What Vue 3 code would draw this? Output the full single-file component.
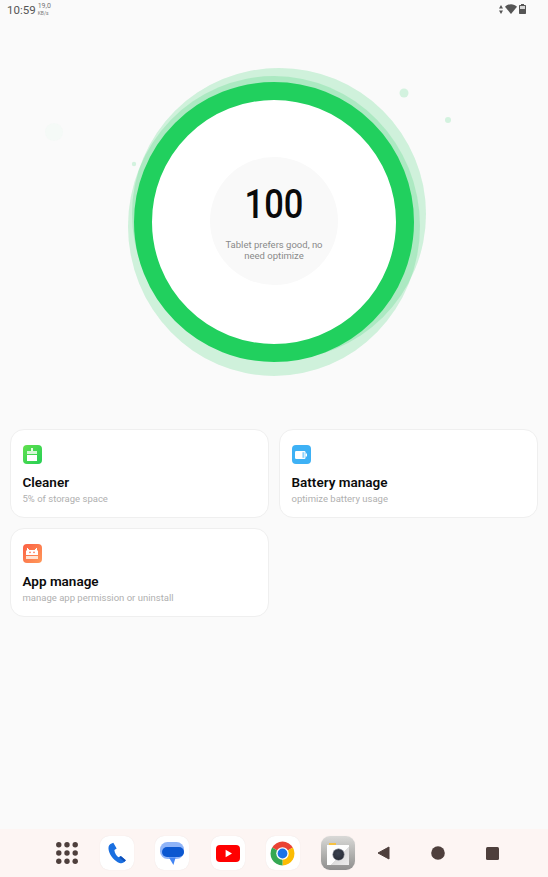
<script setup>
const cards = [
  { key: 'cleaner', title: 'Cleaner', sub: '5% of storage space' },
  { key: 'battery', title: 'Battery manage', sub: 'optimize battery usage' },
  { key: 'apps', title: 'App manage', sub: 'manage app permission or uninstall' },
]
</script>

<template>
  <div class="screen">
    <header class="status">
      <div class="status-left">
        <span class="time">10:59</span>
        <span class="speed"><b>19,0</b><i>KB/s</i></span>
      </div>
      <div class="status-right">
        <svg width="4" height="9" viewBox="0 0 4 9"><path d="M2 0 L4 3.4 H0Z M2 9 L0 5.6 H4Z" fill="#555" /></svg>
        <svg width="12" height="10" viewBox="0 0 12 10"><path d="M0 2.8 C3 -.6 9 -.6 12 2.8 L6 10Z" fill="#555" /></svg>
        <svg width="7" height="10" viewBox="0 0 7 10">
          <path d="M2 0 H5 V1 H6.3 A.7 .7 0 0 1 7 1.7 V9.3 A.7 .7 0 0 1 6.3 10 H.7 A.7 .7 0 0 1 0 9.3 V1.7 A.7 .7 0 0 1 .7 1 H2Z" fill="#555" />
          <rect x="1" y="2" width="5" height="3" fill="#d8d8d8" />
        </svg>
      </div>
    </header>

    <section class="hero">
      <svg class="gauge" width="548" height="400" viewBox="0 0 548 400">
        <circle cx="54" cy="112" r="9" fill="#effaf3" opacity=".5" />
        <circle cx="404" cy="73" r="4.5" fill="#d3f2df" />
        <circle cx="448" cy="100" r="3" fill="#d3f2df" />
        <circle cx="134" cy="144" r="2.2" fill="#d3f2df" />
        <ellipse cx="279" cy="194" rx="147" ry="146" fill="#21cf5f" opacity=".2" />
        <ellipse cx="274" cy="206" rx="146" ry="150" fill="#21cf5f" opacity=".2" />
        <circle cx="274" cy="202" r="131" fill="#fff" stroke="#21d05e" stroke-width="18" />
        <circle cx="274" cy="201" r="64" fill="#f9f9f9" />
      </svg>
      <div class="score">
        <div class="num">100</div>
        <p class="msg">Tablet prefers good, no need optimize</p>
      </div>
    </section>

    <main class="cards">
      <article v-for="c in cards" :key="c.key" class="card">
        <span class="icon" :class="c.key">
          <svg v-if="c.key === 'cleaner'" width="12" height="14" viewBox="0 0 12 14">
            <rect x="5" y="0" width="2" height="4" fill="#e4fbe4" />
            <rect x="1" y="3" width="10" height="3" fill="#d6f8d6" />
            <path d="M1 7 H11 V13 H1Z" fill="#fff" />
          </svg>
          <svg v-else-if="c.key === 'battery'" width="12" height="8" viewBox="0 0 12 8">
            <rect x="0" y="0" width="10.5" height="8" rx="1.2" fill="#fff" />
            <rect x="10.5" y="2.5" width="1.5" height="3" fill="#fff" />
            <rect x="7.4" y="1.2" width="2" height="5.6" fill="#8fd2fa" />
          </svg>
          <svg v-else width="12" height="12" viewBox="0 0 12 12">
            <path d="M1 0 H2 V1 H3 V2 H9 V1 H10 V0 H11 V2 L12 3 V7 H0 V3 L1 2Z" fill="#fff" />
            <circle cx="4" cy="4.4" r=".8" fill="#fb7350" />
            <circle cx="8" cy="4.4" r=".8" fill="#fb7350" />
            <rect x="0" y="8" width="12" height="3" fill="#ffe3d4" />
          </svg>
        </span>
        <h2>{{ c.title }}</h2>
        <p>{{ c.sub }}</p>
      </article>
    </main>

    <nav class="dock">
      <svg class="apps" width="22" height="22" viewBox="0 0 22 22">
        <template v-for="y in [2.8, 11, 19.2]" :key="y">
          <circle v-for="x in [2.8, 11, 19.2]" :key="x" :cx="x" :cy="y" r="2.7" fill="#4e3f3c" />
        </template>
      </svg>

      <span class="tile phone">
        <svg width="18" height="22" viewBox="0 0 22 26">
          <path d="M6.5 .5 L3 2 C.4 3.4 .2 7 1 10.4 C2.6 17 8.4 23.4 14 25.2 C16.6 26 18.8 25.4 20.2 23.8 L21.8 21.8 L15.6 16.6 L12.8 18.2 C10.4 16.8 8 12.6 7.8 9.2 L10.6 7.4Z" fill="#1a6fe0" />
          <path d="M15.6 16.6 L21.8 21.8 L20.2 23.8 L14.2 18.8Z" fill="#0f4fb8" />
        </svg>
      </span>

      <span class="tile">
        <svg width="24" height="23" viewBox="0 0 24 23">
          <rect width="24" height="17" rx="7.5" fill="#8fb4f8" />
          <path d="M9 15.5 L13.4 23 L15.6 15.5Z" fill="#4285f4" />
          <rect x="2" y="5" width="22" height="10" rx="5" fill="#0b57d0" />
        </svg>
      </span>

      <span class="tile">
        <svg width="24" height="17" viewBox="0 0 24 17">
          <rect width="24" height="17" rx="4" fill="#f00" />
          <path d="M9.6 4.8 L16 8.5 L9.6 12.2Z" fill="#fff" />
        </svg>
      </span>

      <span class="tile">
        <svg width="25" height="25" viewBox="0 0 48 48">
          <path d="M24 24 L4.1 12.5 A23 23 0 0 1 43.9 12.5Z" fill="#ea4335" />
          <path d="M24 24 L43.9 12.5 A23 23 0 0 1 24 47Z" fill="#fbbc04" />
          <path d="M24 24 L24 47 A23 23 0 0 1 4.1 12.5Z" fill="#34a853" />
          <circle cx="24" cy="24" r="12" fill="#fff" />
          <circle cx="24" cy="24" r="9.4" fill="#1a73e8" />
        </svg>
      </span>

      <span class="tile camera">
        <span class="film">
          <span class="lens"></span>
        </span>
      </span>

      <span class="keys">
        <svg width="13" height="14" viewBox="0 0 13 14"><path d="M12 1 V13 L1 7Z" fill="#4e3f3c" stroke="#4e3f3c" stroke-linejoin="round" /></svg>
        <svg width="14" height="14" viewBox="0 0 14 14"><circle cx="7" cy="7" r="6.8" fill="#4e3f3c" /></svg>
        <svg width="13" height="13" viewBox="0 0 13 13"><rect width="13" height="13" rx="1.5" fill="#4e3f3c" /></svg>
      </span>
    </nav>
  </div>
</template>

<style>
html, body { margin: 0; background: #fafafa; }
</style>

<style scoped>
.screen {
  width: 548px;
  height: 877px;
  overflow: hidden;
  display: flex;
  flex-direction: column;
  background: #fafafa;
  font-family: Roboto, "Liberation Sans", sans-serif;
}
.status {
  height: 20px;
  flex: none;
  display: flex;
  justify-content: space-between;
  align-items: center;
  padding: 0 22px 0 7px;
  color: #555;
}
.status-left { display: flex; align-items: flex-start; gap: 2px; }
.time { font-size: 11.5px; line-height: 21px; }
.speed { display: flex; flex-direction: column; margin-top: 3px; color: #777; }
.speed b { font-weight: 400; font-size: 7px; line-height: 7px; }
.speed i { font-style: normal; font-size: 5px; line-height: 6px; }
.status-right { display: flex; align-items: center; gap: 2px; margin-top: -2px; }

.hero { position: relative; height: 400px; flex: none; }
.gauge { display: block; }
.score {
  position: absolute;
  left: 210px;
  top: 137px;
  width: 128px;
  height: 128px;
  display: flex;
  flex-direction: column;
  align-items: center;
  text-align: center;
}
.num {
  margin-top: 21px;
  font-size: 41px;
  line-height: 52px;
  font-weight: 500;
  color: #0a0a0a;
  transform: scaleX(.84);
}
.msg {
  margin: 9px 0 0;
  width: 110px;
  font-size: 9.5px;
  line-height: 11px;
  color: #8a8a8a;
}

.cards {
  display: grid;
  grid-template-columns: 259px 259px;
  gap: 10px;
  padding: 9px 10px 0;
  align-content: start;
  flex: 1;
}
.card {
  box-sizing: border-box;
  height: 89px;
  padding: 15px 11.5px 0;
  background: #fff;
  border: 1px solid #efefef;
  border-radius: 14px;
}
.icon {
  width: 19px;
  height: 19px;
  border-radius: 4px;
  display: flex;
  align-items: center;
  justify-content: center;
}
.icon.cleaner { background: linear-gradient(135deg, #62e04e, #25cf55); }
.icon.battery { background: #3eb1f5; }
.icon.apps { background: linear-gradient(135deg, #fb5f43, #ff9a5a); }
.card h2 {
  margin: 9px 0 0;
  font-size: 13.5px;
  line-height: 18px;
  font-weight: 600;
  color: #0c0c0c;
}
.card p {
  margin: 1px 0 0;
  font-size: 9.5px;
  line-height: 14px;
  color: #b0b0b0;
}

.dock {
  height: 48px;
  flex: none;
  background: #fdf5f3;
  display: flex;
  align-items: center;
  padding: 0 0 0 56px;
}
.apps { margin-right: 22px; }
.tile {
  box-sizing: border-box;
  width: 34px;
  height: 34px;
  margin-right: 21.25px;
  background: #fff;
  border-radius: 9px;
  display: flex;
  align-items: center;
  justify-content: center;
  box-shadow: 0 0 1px #e6dedc;
}
.camera {
  background: linear-gradient(180deg, #d9d9d7, #a5a5a3 70%, #8f8f8f);
  margin-right: 0;
}
.film {
  position: relative;
  width: 22px;
  height: 20px;
  margin-top: 3px;
  background: linear-gradient(135deg, #fdfdfd 55%, #dcdcdc 56%, #ededed);
  display: flex;
  align-items: center;
  justify-content: center;
}
.film::before {
  content: "";
  position: absolute;
  left: 2px;
  top: -2px;
  width: 7px;
  height: 2px;
  background: #f6c142;
}
.lens {
  width: 11px;
  height: 11px;
  border-radius: 50%;
  background: radial-gradient(circle at 45% 40%, #3a4150, #23272f);
  box-shadow: 0 0 0 .5px #6a7080;
}
.keys {
  display: flex;
  align-items: center;
  margin-left: 22px;
  gap: 41px;
}
</style>
